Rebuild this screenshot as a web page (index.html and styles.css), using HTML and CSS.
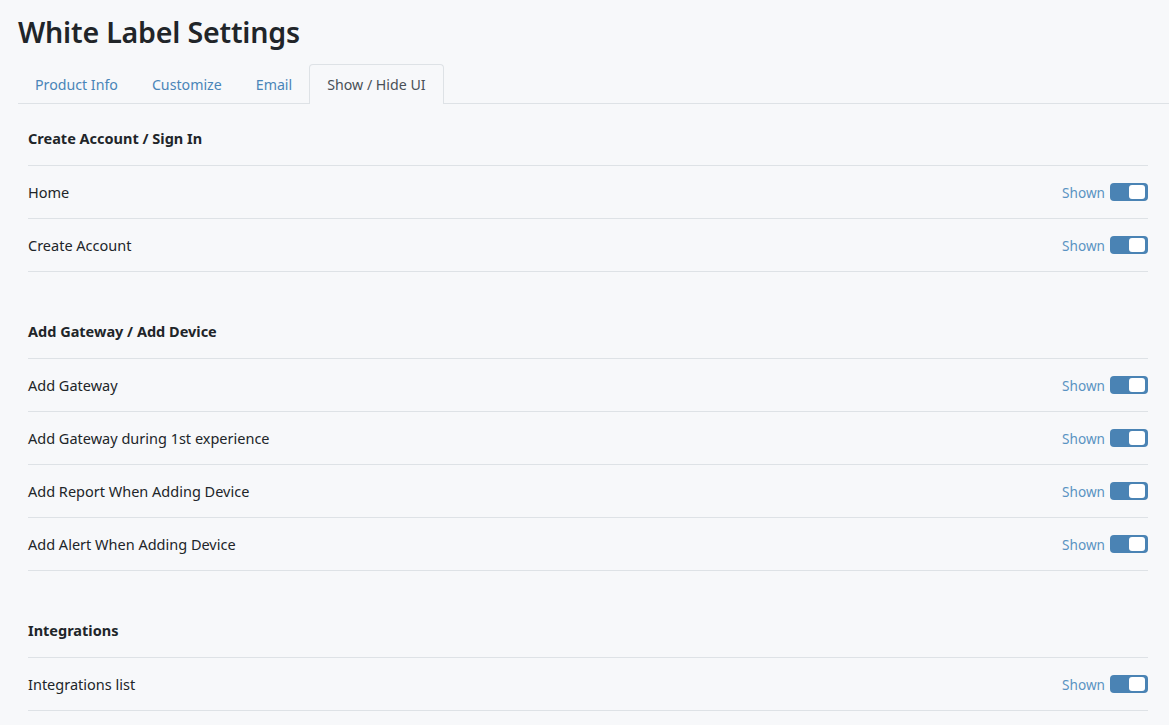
FILE: index.html
```html
<!DOCTYPE html>
<html lang="en">
<head>
<meta charset="utf-8">
<title>White Label Settings</title>
<link rel="stylesheet" href="styles.css">
</head>
<body>
<div class="page">
  <h1 class="title">White Label Settings</h1>
  <ul class="tabs">
    <li class="tab">Product Info</li>
    <li class="tab">Customize</li>
    <li class="tab">Email</li>
    <li class="tab active">Show / Hide UI</li>
  </ul>
  <div class="content">
    <section class="section">
      <div class="section-head">Create Account / Sign In</div>
      <div class="row"><span class="label">Home</span><span class="state">Shown <span class="toggle"><span class="knob"></span></span></span></div>
      <div class="row"><span class="label">Create Account</span><span class="state">Shown <span class="toggle"><span class="knob"></span></span></span></div>
    </section>
    <section class="section">
      <div class="section-head">Add Gateway / Add Device</div>
      <div class="row"><span class="label">Add Gateway</span><span class="state">Shown <span class="toggle"><span class="knob"></span></span></span></div>
      <div class="row"><span class="label">Add Gateway during 1st experience</span><span class="state">Shown <span class="toggle"><span class="knob"></span></span></span></div>
      <div class="row"><span class="label">Add Report When Adding Device</span><span class="state">Shown <span class="toggle"><span class="knob"></span></span></span></div>
      <div class="row"><span class="label">Add Alert When Adding Device</span><span class="state">Shown <span class="toggle"><span class="knob"></span></span></span></div>
    </section>
    <section class="section">
      <div class="section-head">Integrations</div>
      <div class="row"><span class="label">Integrations list</span><span class="state">Shown <span class="toggle"><span class="knob"></span></span></span></div>
    </section>
  </div>
</div>
</body>
</html>
```

FILE: styles.css
```css
* { box-sizing: border-box; }
html, body { margin: 0; padding: 0; }
body {
  background: #f7f8fa;
  font-family: "Noto Sans", "Open Sans", sans-serif;
  color: #212529;
  overflow: hidden;
}
.page { padding: 12px 0 0 18px; }
.title {
  margin: 0;
  font-size: 28.6px;
  font-weight: 600;
  line-height: 40px;
  color: #212529;
  letter-spacing: -0.2px;
}
.tabs {
  list-style: none;
  margin: 12px 0 0 0;
  padding: 0;
  display: flex;
  border-bottom: 1px solid #dee2e6;
}
.tab {
  padding: 0 16px;
  height: 39px;
  line-height: 39px;
  font-size: 14.2px;
  color: #4a85b8;
  border: 1px solid transparent;
  border-bottom: none;
  border-radius: 4px 4px 0 0;
  margin-bottom: -1px;
}
.tab.active {
  padding: 0 17px;
  color: #495057;
  border-color: #dee2e6;
  background: #f7f8fa;
  height: 40px;
}
.content {
  padding: 8px 21px 0 10px;
  display: flex;
  flex-direction: column;
  gap: 33px;
}
.section-head {
  height: 54px;
  display: flex;
  align-items: center;
  padding-bottom: 2px;
  font-weight: 700;
  font-size: 14.5px;
  border-bottom: 1px solid #dee2e6;
}
.row {
  height: 53px;
  display: flex;
  align-items: center;
  justify-content: space-between;
  border-bottom: 1px solid #dee2e6;
  font-size: 14.5px;
}
.label { color: #212529; }
.state {
  display: flex;
  align-items: center;
  gap: 5px;
  color: #5a93c2;
  font-size: 13.6px;
}
.toggle {
  width: 38px;
  height: 18px;
  background: #4a83b4;
  border-radius: 4px;
  display: flex;
  justify-content: flex-end;
  align-items: center;
  padding-right: 3px;
}
.knob {
  width: 16px;
  height: 14px;
  background: #fff;
  border-radius: 3px;
}
```
